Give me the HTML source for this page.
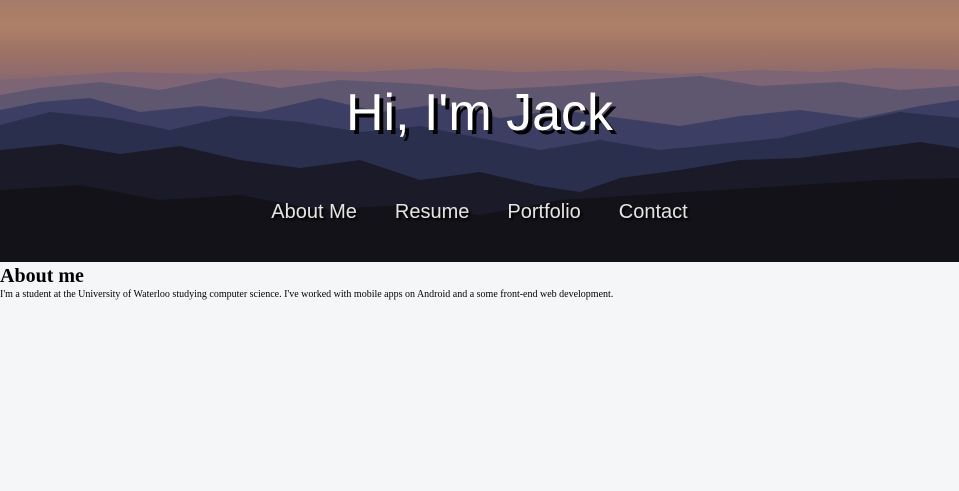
<!DOCTYPE html>
<html><head><meta charset="utf-8"><style>
html,body{margin:0;padding:0;background:#f5f6f8;}
.hero{position:relative;width:959px;height:262px;overflow:hidden;background:linear-gradient(#a47c68 0%,#ad8068 10%,#9d7265 20%,#8f6b6c 28%,#7a6072 34%);}
.hero svg{position:absolute;left:0;top:0;}
h1.t{position:absolute;left:0;width:959px;top:83px;margin:0;text-align:center;font:52px "Liberation Sans",sans-serif;color:#fff;text-shadow:4px 4px 0 #000;}
.nav{position:absolute;top:201px;left:0;width:959px;text-align:center;font:20px "Liberation Sans",sans-serif;color:#e4e4e4;text-shadow:2px 2px 2px #000;}
.nav span{margin:0 19px}
.c{font-family:"Liberation Serif",serif;color:#000}
.c h2{margin:0;font-size:20px;line-height:24px;padding-top:2px}
.c p{margin:0;font-size:10px;line-height:13px}
</style></head><body>
<div class="hero">
<svg width="959" height="262" viewBox="0 0 959 262">
<path d="M0 80 L60 76 L120 72 L200 74 L280 70 L360 72 L440 68 L520 72 L600 70 L680 74 L760 70 L820 72 L880 68 L959 70 L959 262 L0 262Z" fill="#7d6575"/>
<path d="M0 95 L40 88 L100 82 L160 90 L220 78 L280 88 L340 80 L420 84 L480 90 L560 86 L640 80 L700 76 L760 86 L840 82 L900 90 L959 86 L959 262 L0 262Z" fill="#5f5670"/>
<path d="M0 110 L40 102 L90 98 L140 112 L200 106 L260 112 L320 98 L380 112 L440 104 L500 118 L560 110 L620 118 L680 126 L740 116 L800 110 L860 118 L920 106 L959 100 L959 262 L0 262Z" fill="#3c3f63"/>
<path d="M0 125 L50 112 L110 118 L170 130 L230 116 L300 122 L360 132 L420 126 L480 138 L540 150 L600 140 L660 150 L720 144 L780 138 L840 124 L900 112 L959 118 L959 262 L0 262Z" fill="#2a2f4e"/>
<path d="M0 150 L60 144 L120 154 L180 146 L240 160 L300 168 L360 160 L420 180 L480 172 L540 186 L580 192 L620 178 L680 170 L740 160 L800 158 L860 150 L920 142 L959 148 L959 262 L0 262Z" fill="#1b1a28"/>
<path d="M0 190 L80 185 L160 200 L240 195 L320 210 L400 205 L480 215 L560 200 L640 195 L720 190 L800 185 L880 180 L959 178 L959 262 L0 262Z" fill="#131219"/>
</svg>
<h1 class="t">Hi, I'm Jack</h1>
<div class="nav"><span>About Me</span><span>Resume</span><span>Portfolio</span><span>Contact</span></div>
</div>
<div class="c"><h2>About me</h2><p>I'm a student at the University of Waterloo studying computer science. I've worked with mobile apps on Android and a some front-end web development.</p></div>
</body></html>
